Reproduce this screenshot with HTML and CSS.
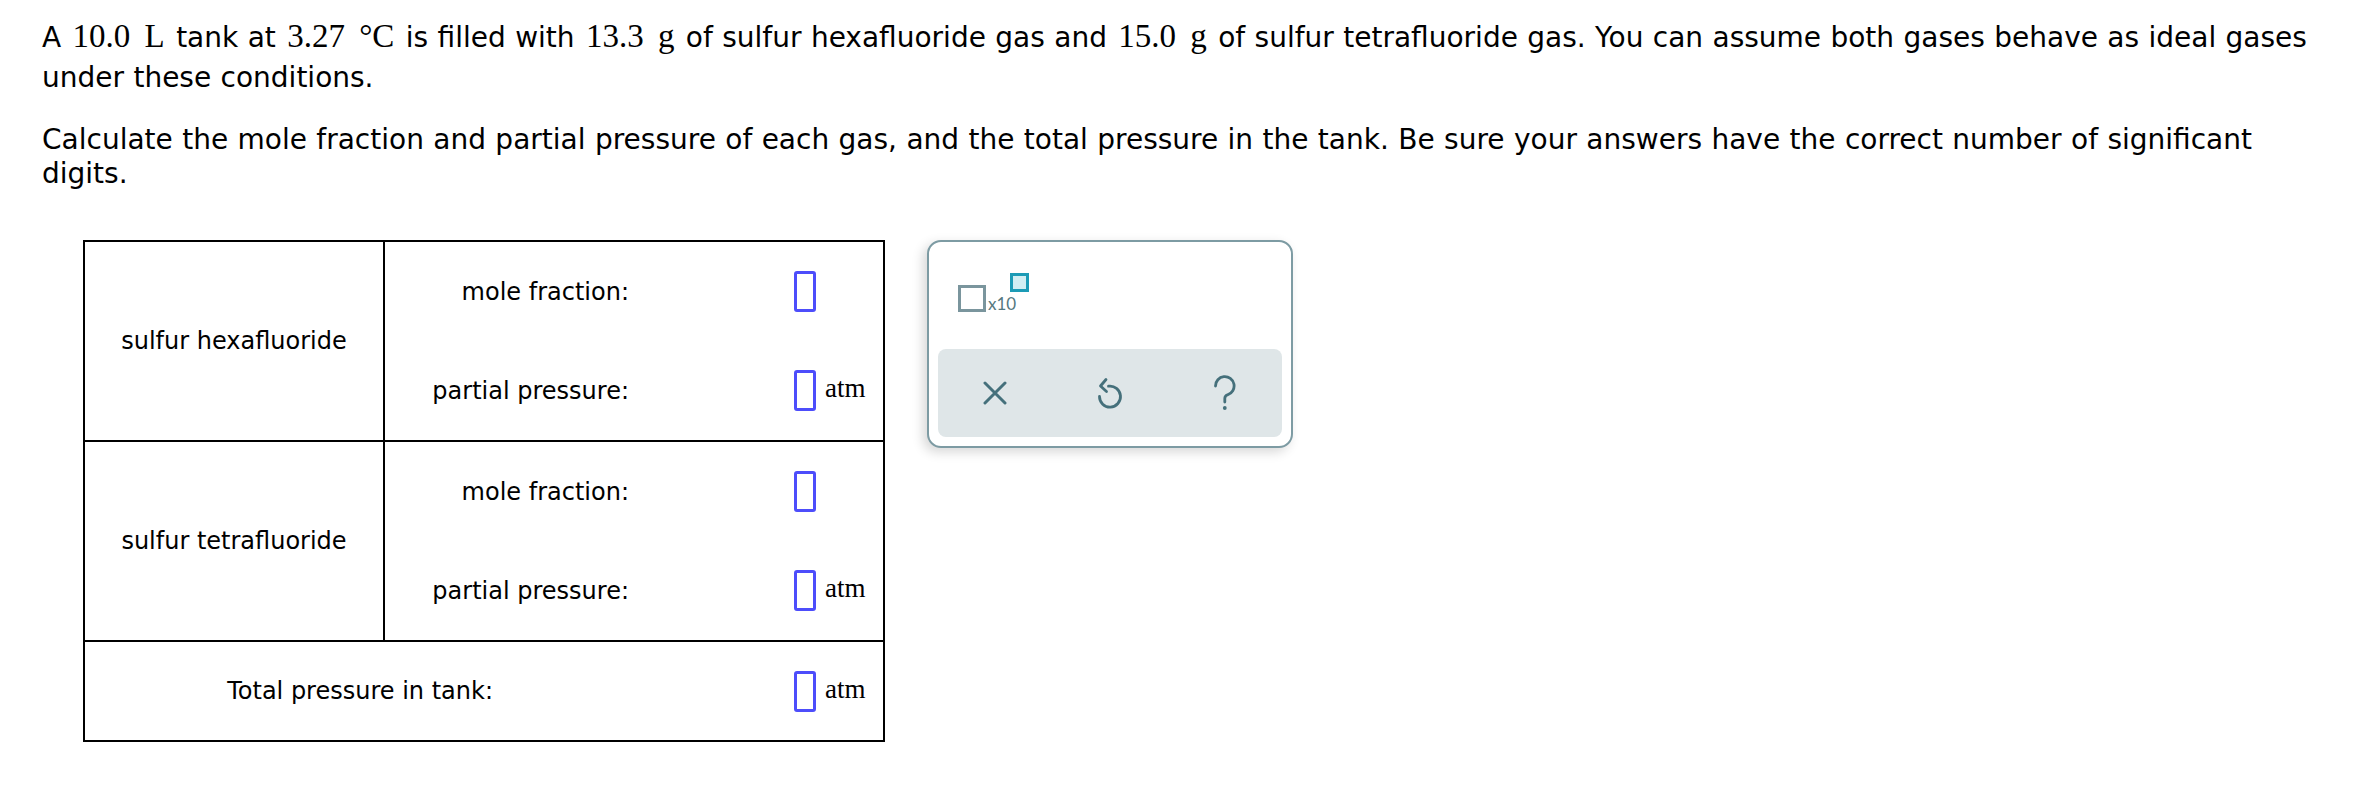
FILE: index.html
```html
<!DOCTYPE html>
<html>
<head>
<meta charset="utf-8">
<link rel="stylesheet" href="styles.css">
</head>
<body>
<div class="page">
  <p class="prose prose-intro">A <span class="math">10.0 L</span> tank at <span class="math">3.27 °C</span> is filled with <span class="math">13.3 g</span> of sulfur hexafluoride gas and <span class="math">15.0 g</span> <span>of sulfur tetrafluoride gas. You can assume both gases behave as ideal gases</span> <span>under these conditions.</span></p>
  <p class="prose">Calculate the mole fraction and partial pressure of each gas, and the total pressure in the tank. Be sure your answers have the correct number of significant digits.</p>

  <div class="work">
    <div class="qtable">
      <div class="group">
        <div class="gas">sulfur hexafluoride</div>
        <div class="fields">
          <div class="field"><span class="label">mole fraction:</span><span class="ans"><span class="box"></span></span></div>
          <div class="field"><span class="label">partial pressure:</span><span class="ans"><span class="box"></span><span class="unit">atm</span></span></div>
        </div>
      </div>
      <div class="group">
        <div class="gas">sulfur tetrafluoride</div>
        <div class="fields">
          <div class="field"><span class="label">mole fraction:</span><span class="ans"><span class="box"></span></span></div>
          <div class="field"><span class="label">partial pressure:</span><span class="ans"><span class="box"></span><span class="unit">atm</span></span></div>
        </div>
      </div>
      <div class="total">
        <span class="total-label">Total pressure in tank:</span><span class="ans total-ans"><span class="box"></span><span class="unit">atm</span></span>
      </div>
    </div>

    <div class="popup">
      <div class="popup-top">
        <div class="sci">
          <span class="sci-base"></span><span class="sci-x">x10</span><span class="sci-exp"></span>
        </div>
      </div>
      <div class="toolbar">
        <div class="tool">
          <svg width="24" height="24" viewBox="0 0 24 24"><path d="M2 2 L22 22 M22 2 L2 22" fill="none" stroke="#45707b" stroke-width="3" stroke-linecap="round"/></svg>
        </div>
        <div class="tool">
          <svg width="28" height="32" viewBox="0 0 28 32"><path d="M12.5 9.2 A 10.5 10.5 0 1 1 3.5 19.5" fill="none" stroke="#45707b" stroke-width="2.8" stroke-linecap="round"/><path d="M10 2.5 L4.5 9 L10.5 14.5" fill="none" stroke="#45707b" stroke-width="2.8" stroke-linecap="round" stroke-linejoin="round"/></svg>
        </div>
        <div class="tool">
          <svg width="26" height="36" viewBox="0 0 26 36"><path d="M3.5 11 A 9.3 9.3 0 1 1 15.5 19.8 C 13.8 20.4 12.8 21.8 12.8 23.6 V 27" fill="none" stroke="#45707b" stroke-width="2.8" stroke-linecap="round"/><circle cx="12.8" cy="33" r="1.9" fill="#45707b"/></svg>
        </div>
      </div>
    </div>
  </div>
</div>
</body>
</html>
```

FILE: styles.css
```css
html, body {
  margin: 0;
  padding: 0;
  background: #fff;
}

.page {
  padding: 18px 23px 0 42px;
  color: #000;
  font-family: "DejaVu Sans", Verdana, sans-serif;
}

.prose {
  margin: 0;
  font-size: 28px;
  line-height: 34px;
  word-spacing: 0.5px;
}

.prose-intro {
  line-height: 40px;
  margin-bottom: 25px;
}

.math {
  font-family: "Liberation Serif", "Times New Roman", serif;
  font-size: 33px;
  line-height: 1;
  word-spacing: 6px;
  margin: 0 2px;
}

.work {
  display: flex;
  align-items: flex-start;
  gap: 42px;
  margin-top: 49px;
  margin-left: 41px;
}

.qtable {
  width: 798px;
  border: 2px solid #000;
  font-size: 24px;
}

.group {
  display: flex;
  border-bottom: 2px solid #000;
}

.gas {
  width: 298px;
  border-right: 2px solid #000;
  display: flex;
  align-items: center;
  justify-content: center;
}

.fields {
  flex: 1;
  display: flex;
  flex-direction: column;
}

.field {
  height: 99px;
  display: flex;
  align-items: center;
}

.label {
  width: 244px;
  text-align: right;
}

.ans {
  margin-left: 165px;
  display: flex;
  align-items: center;
}

.box {
  display: block;
  width: 16px;
  height: 35px;
  border: 3px solid #4d4dfb;
  border-radius: 3px;
}

.unit {
  font-family: "Liberation Serif", "Times New Roman", serif;
  font-size: 27px;
  margin-left: 9px;
  margin-top: -4px;
}

.total {
  height: 98px;
  display: flex;
  align-items: center;
}

.total-label {
  width: 408px;
  text-align: right;
}

.total-ans {
  margin-left: 301px;
}

.popup {
  width: 344px;
  padding: 9px;
  border: 2px solid #7d9ba3;
  border-radius: 14px;
  background: #fff;
  box-shadow: -4px 4px 12px rgba(0, 0, 0, 0.16);
}

.popup-top {
  height: 98px;
  box-sizing: border-box;
  padding: 22px 0 0 20px;
}

.sci {
  display: flex;
  align-items: flex-start;
}

.sci-base {
  display: block;
  width: 22px;
  height: 21px;
  margin-top: 12px;
  border: 3px solid #7a959d;
}

.sci-x {
  font-family: "Lato", "Open Sans", sans-serif;
  font-size: 17px;
  line-height: 17px;
  color: #55787f;
  margin-top: 22px;
  margin-left: 2px;
}

.sci-exp {
  display: block;
  width: 13px;
  height: 13px;
  margin-left: -6px;
  border: 3px solid #1c9bb6;
  background: #d2eef3;
}

.toolbar {
  height: 88px;
  display: flex;
  background: #dfe6e8;
  border-radius: 8px;
}

.tool {
  flex: 1;
  display: flex;
  align-items: center;
  justify-content: center;
}

.tool svg {
  display: block;
}
```
